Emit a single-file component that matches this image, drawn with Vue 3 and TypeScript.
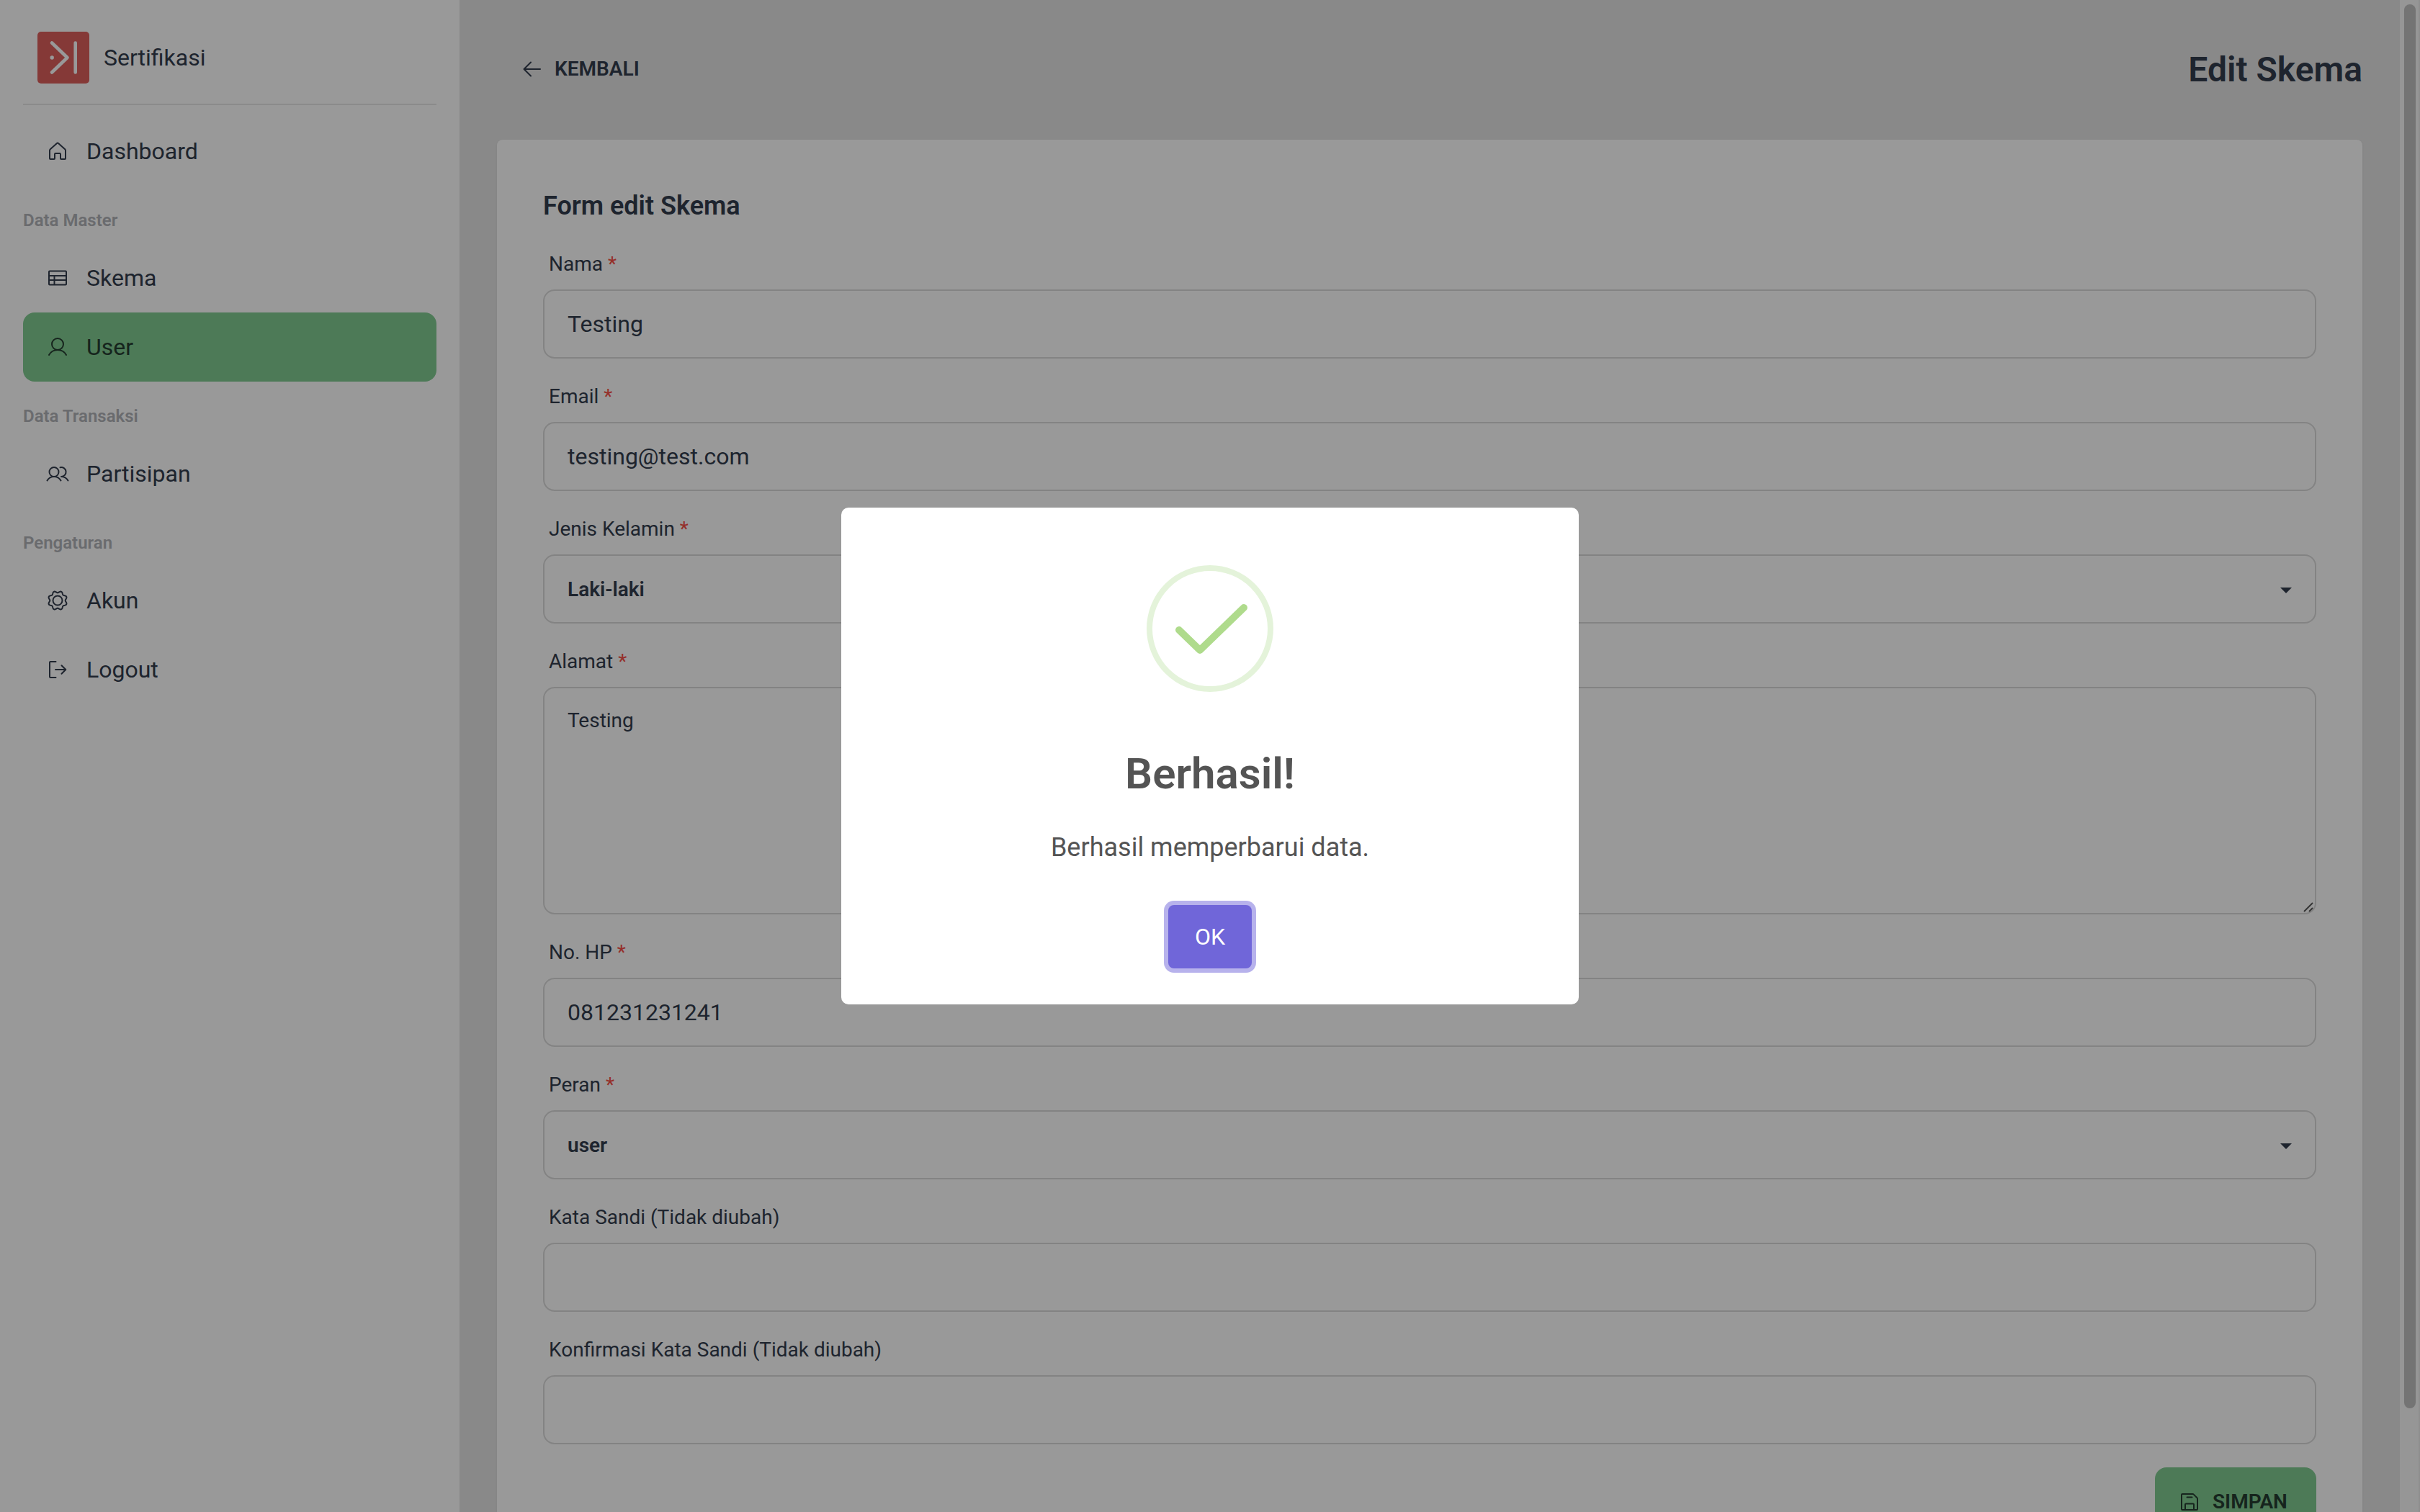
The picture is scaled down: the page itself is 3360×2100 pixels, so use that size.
<script setup lang="ts">
import { ref } from 'vue'

type IconName = 'home' | 'table' | 'user' | 'users' | 'gear' | 'exit' | 'back' | 'save'

interface MenuItem {
  label: string
  icon: IconName
  active?: boolean
}

interface MenuGroup {
  title?: string
  items: MenuItem[]
}

interface Field {
  id: string
  label: string
  kind: 'text' | 'email' | 'tel' | 'password' | 'select' | 'area'
  required?: boolean
  value: string
  options?: string[]
}

// Outline of the settings cog: a circle whose radius ripples eight times.
const cog = (() => {
  const steps = 96
  const points: string[] = []
  for (let i = 0; i < steps; i++) {
    const angle = (i / steps) * Math.PI * 2
    const radius = 12 - 1.3 * Math.cos(angle * 8)
    points.push(`${(16 + radius * Math.cos(angle)).toFixed(2)} ${(16 + radius * Math.sin(angle)).toFixed(2)}`)
  }
  return `M${points.join('L')}Z`
})()

const icons: Record<IconName, string> = {
  home: 'M5 15Q5 14 5.8 13.2L15 5Q16 4 17 5L26.2 13.2Q27 14 27 15V26Q27 27 26 27H21Q20 27 20 26V20Q20 19 19 19H13Q12 19 12 20V26Q12 27 11 27H6Q5 27 5 26Z',
  table: 'M5 6.5H27Q28 6.5 28 7.5V24.5Q28 25.5 27 25.5H5Q4 25.5 4 24.5V7.5Q4 6.5 5 6.5ZM4 13H28M4 19H28M11.5 13V25.5',
  user: 'M24 12A8 8 0 1 1 8 12A8 8 0 1 1 24 12ZM4 27C6.5 22.5 11 20 16 20S25.5 22.5 28 27',
  users:
    'M17.5 13.5A6.5 6.5 0 1 1 4.5 13.5A6.5 6.5 0 1 1 17.5 13.5ZM1.5 25.5C3.5 22 7 20 11 20S18.5 22 20.5 25.5M19.5 7.2A6.5 6.5 0 1 1 21 20C25 20 28.5 22 30.5 25.5',
  gear: `${cog}M22.5 16A6.5 6.5 0 1 1 9.5 16A6.5 6.5 0 1 1 22.5 16Z`,
  exit: 'M13.5 5H6Q5 5 5 6V26Q5 27 6 27H13.5M13 16H27M21.5 10.2L27.3 16L21.5 21.8',
  back: 'M5.5 16H28M15 6.5L5.5 16L15 25.5',
  save: 'M6 5H20.5Q21.2 5 21.8 5.6L26.4 10.2Q27 10.8 27 11.5V26Q27 27 26 27H6Q5 27 5 26V6Q5 5 6 5ZM10 27V19.5Q10 18.5 11 18.5H21Q22 18.5 22 19.5V27M12.5 9.5H19.5',
}

const groups: MenuGroup[] = [
  { items: [{ label: 'Dashboard', icon: 'home' }] },
  {
    title: 'Data Master',
    items: [
      { label: 'Skema', icon: 'table' },
      { label: 'User', icon: 'user', active: true },
    ],
  },
  { title: 'Data Transaksi', items: [{ label: 'Partisipan', icon: 'users' }] },
  {
    title: 'Pengaturan',
    items: [
      { label: 'Akun', icon: 'gear' },
      { label: 'Logout', icon: 'exit' },
    ],
  },
]

const fields = ref<Field[]>([
  { id: 'nama', label: 'Nama', kind: 'text', required: true, value: 'Testing' },
  { id: 'email', label: 'Email', kind: 'email', required: true, value: 'testing@test.com' },
  { id: 'kelamin', label: 'Jenis Kelamin', kind: 'select', required: true, value: 'Laki-laki', options: ['Laki-laki', 'Perempuan'] },
  { id: 'alamat', label: 'Alamat', kind: 'area', required: true, value: 'Testing' },
  { id: 'hp', label: 'No. HP', kind: 'tel', required: true, value: '081231231241' },
  { id: 'peran', label: 'Peran', kind: 'select', required: true, value: 'user', options: ['user', 'admin'] },
  { id: 'sandi', label: 'Kata Sandi (Tidak diubah)', kind: 'password', value: '' },
  { id: 'konfirmasi', label: 'Konfirmasi Kata Sandi (Tidak diubah)', kind: 'password', value: '' },
])

const dialogOpen = ref(true)
</script>

<template>
  <div class="shell">
    <aside class="sidebar">
      <div class="brand">
        <svg class="logo" viewBox="0 0 72 72" aria-hidden="true">
          <rect width="72" height="72" rx="5" fill="#de5f5d" />
          <g fill="none" stroke="#fff" stroke-width="4.6" stroke-linecap="round" stroke-linejoin="round">
            <path d="M20 15.5L41.5 36L20 56.5M52.7 15.5V56.5" />
          </g>
          <circle cx="20.2" cy="36" r="2.7" fill="#fff" />
        </svg>
        <span>Sertifikasi</span>
      </div>
      <nav class="menu">
        <template v-for="(group, g) in groups" :key="g">
          <h2 v-if="group.title" class="group-title">{{ group.title }}</h2>
          <a v-for="item in group.items" :key="item.label" href="#" class="item" :class="{ active: item.active }">
            <svg class="icon" viewBox="0 0 32 32" aria-hidden="true"><path :d="icons[item.icon]" /></svg>
            <span>{{ item.label }}</span>
          </a>
        </template>
      </nav>
    </aside>

    <main class="content">
      <header class="topbar">
        <a href="#" class="btn">
          <svg class="icon" viewBox="0 0 32 32" aria-hidden="true"><path :d="icons.back" /></svg>
          <span>KEMBALI</span>
        </a>
        <h1 class="page-title">Edit Skema</h1>
      </header>

      <form class="card" @submit.prevent="dialogOpen = true">
        <h2 class="card-title">Form edit Skema</h2>
        <div v-for="field in fields" :key="field.id" class="field">
          <label class="label" :for="field.id">
            {{ field.label }} <span v-if="field.required" class="star">*</span>
          </label>
          <div class="control">
            <template v-if="field.kind === 'select'">
              <select :id="field.id" v-model="field.value" class="box select">
                <option v-for="option in field.options" :key="option">{{ option }}</option>
              </select>
              <svg class="caret" viewBox="0 0 16 8" aria-hidden="true"><path d="M0 0H16L8 8Z" /></svg>
            </template>
            <template v-else-if="field.kind === 'area'">
              <textarea :id="field.id" v-model="field.value" class="box area"></textarea>
              <svg class="grip" viewBox="0 0 14 14" aria-hidden="true"><path d="M1 13L13 1M8 13L13 8" /></svg>
            </template>
            <input v-else :id="field.id" v-model="field.value" :type="field.kind" class="box" />
          </div>
        </div>
        <div class="actions">
          <button type="submit" class="btn primary">
            <svg class="icon" viewBox="0 0 32 32" aria-hidden="true"><path :d="icons.save" /></svg>
            <span>SIMPAN</span>
          </button>
        </div>
      </form>
    </main>

    <div class="scroll-track" aria-hidden="true"><div class="scroll-thumb"></div></div>

    <div v-if="dialogOpen" class="backdrop">
      <section class="dialog" role="dialog" aria-modal="true" aria-labelledby="dialog-title">
        <svg class="success" viewBox="0 0 176 176" aria-hidden="true">
          <circle cx="88" cy="88" r="84" fill="none" stroke="#e4f3da" stroke-width="8" />
          <path d="M45 90L74 118L135 59" fill="none" stroke="#afdb8c" stroke-width="10" stroke-linecap="round" stroke-linejoin="round" />
        </svg>
        <h2 id="dialog-title" class="dialog-title">Berhasil!</h2>
        <p class="dialog-text">Berhasil memperbarui data.</p>
        <button type="button" class="ok" @click="dialogOpen = false">OK</button>
      </section>
    </div>
  </div>
</template>

<style>
body {
  background: #e4e4e4;
}
</style>

<style scoped>
.shell {
  display: flex;
  height: 100vh;
  overflow: hidden;
  background: #e4e4e4;
  color: #333c4d;
  font-family: Roboto, "Liberation Sans", sans-serif;
  font-size: 32px;
  line-height: 48px;
}

.shell *,
.shell *::before {
  box-sizing: border-box;
}

h1,
h2,
p {
  margin: 0;
}

a {
  color: inherit;
  text-decoration: none;
}

.icon {
  flex: none;
  width: 32px;
  height: 32px;
  fill: none;
  stroke: currentColor;
  stroke-width: 2;
  stroke-linecap: round;
  stroke-linejoin: round;
}

.sidebar {
  flex: none;
  width: 638px;
  padding: 16px 32px;
  background: #fff;
}

.brand {
  display: flex;
  align-items: center;
  gap: 20px;
  height: 130px;
  padding: 0 20px;
  border-bottom: 2px solid #e8e8e8;
}

.logo {
  width: 72px;
  height: 72px;
}

.menu {
  display: flex;
  flex-direction: column;
  padding-top: 16px;
}

.group-title {
  padding: 24px 0 8px;
  color: #b1b3b8;
  font-size: 24px;
  font-weight: 600;
}

.item {
  display: flex;
  align-items: center;
  gap: 24px;
  height: 96px;
  padding: 0 32px;
  border-radius: 16px;
}

.active {
  background: #80cb91;
  color: #263d31;
}

.content {
  flex: 1;
  min-width: 0;
  padding: 48px 52px;
}

.topbar {
  display: flex;
  align-items: center;
  justify-content: space-between;
  margin-bottom: 50px;
}

.btn {
  display: flex;
  align-items: center;
  gap: 16px;
  min-width: 224px;
  height: 96px;
  padding: 0 32px;
  border: 0;
  border-radius: 16px;
  background: none;
  color: inherit;
  font: 600 28px/40px Roboto, "Liberation Sans", sans-serif;
}

.primary {
  background: #80cb91;
  color: #263d31;
}

.page-title {
  padding-top: 2px;
  font-size: 48px;
  font-weight: 600;
  line-height: 64px;
}

.card {
  display: flex;
  flex-direction: column;
  gap: 16px;
  padding: 64px;
  border-radius: 8px;
  background: #fff;
  box-shadow: 0 2px 4px rgba(0, 0, 0, 0.05);
}

.card-title {
  font-size: 36px;
  font-weight: 600;
  line-height: 56px;
}

.label {
  display: block;
  padding: 17px 8px 15px;
  font-size: 28px;
  line-height: 40px;
}

.star {
  color: #f84f46;
}

.control {
  display: flex;
  position: relative;
}

.box {
  display: block;
  width: 100%;
  height: 96px;
  margin: 0;
  padding: 0 32px;
  border: 2px solid #dbdbdb;
  border-radius: 16px;
  outline: 0;
  background: #fff;
  color: inherit;
  font: 400 32px/48px Roboto, "Liberation Sans", sans-serif;
}

.select {
  padding-top: 2px;
  appearance: none;
  font-size: 28px;
  font-weight: 600;
}

.area {
  height: 316px;
  padding: 17px 32px 16px;
  font-size: 28px;
  line-height: 56px;
  resize: none;
}

.caret {
  position: absolute;
  top: 46px;
  right: 34px;
  width: 16px;
  height: 8px;
  fill: currentColor;
  pointer-events: none;
}

.grip {
  position: absolute;
  right: 4px;
  bottom: 3px;
  width: 14px;
  height: 14px;
  fill: none;
  stroke: #5c5c5c;
  stroke-width: 2;
  pointer-events: none;
}

.actions {
  display: flex;
  justify-content: flex-end;
  padding-top: 16px;
}

.scroll-track {
  flex: none;
  width: 28px;
  padding: 6px;
  border-right: 2px solid #ededed;
  background: #fafafa;
}

.scroll-thumb {
  width: 16px;
  height: calc(100% - 138px);
  border-radius: 8px;
  background: #c1c1c1;
}

.backdrop {
  position: fixed;
  inset: 0;
  display: grid;
  place-items: center;
  background: rgba(0, 0, 0, 0.4);
}

.dialog {
  display: flex;
  flex-direction: column;
  align-items: center;
  width: 1024px;
  max-width: 100%;
  padding: 80px 32px 50px;
  border-radius: 10px;
  background: #fff;
  color: #545454;
  text-align: center;
}

.success {
  width: 176px;
  height: 176px;
}

.dialog-title {
  margin-top: 78px;
  font-size: 60px;
  font-weight: 600;
  line-height: 72px;
}

.dialog-text {
  margin-top: 44px;
  font-size: 36px;
  line-height: 44px;
}

.ok {
  min-width: 116px;
  height: 88px;
  margin-top: 58px;
  border: 0;
  border-radius: 8px;
  background: #7066d9;
  box-shadow: 0 0 0 6px #b7b2ec;
  color: #fff;
  font: 400 32px/48px Roboto, "Liberation Sans", sans-serif;
}
</style>
